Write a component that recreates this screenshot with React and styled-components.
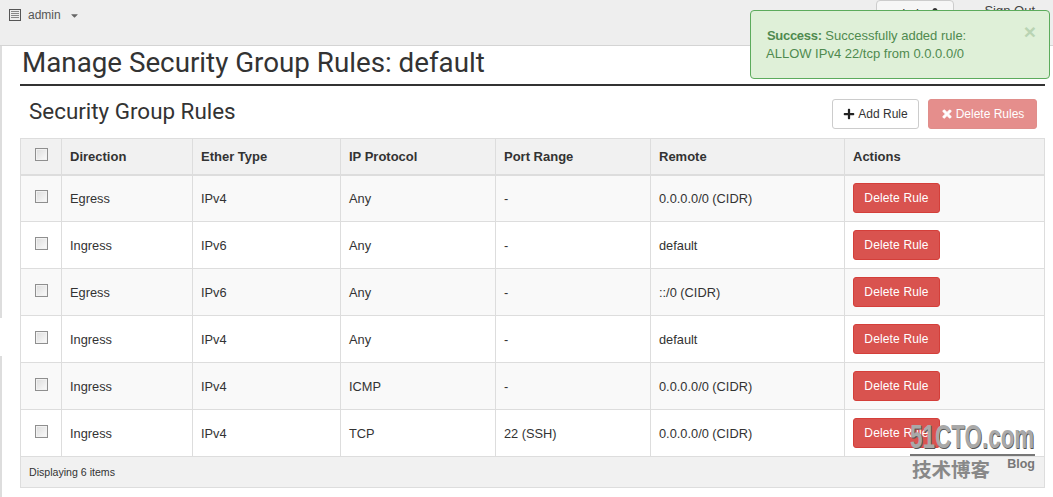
import React from "react";
import styled, { createGlobalStyle } from "styled-components";
import { FaPlus, FaTimes, FaUser, FaCaretDown } from "react-icons/fa";

const GlobalStyle = createGlobalStyle`
  html, body {
    margin: 0;
    padding: 0;
    background: #fff;
    overflow: hidden;
  }
  body {
    font-family: "Liberation Sans", Arial, sans-serif;
    font-size: 13px;
    color: #333;
  }
`;

const Page = styled.div`
  position: relative;
  width: 1053px;
  height: 497px;
  overflow: hidden;
`;

const Topbar = styled.div`
  display: flex;
  align-items: flex-start;
  justify-content: space-between;
  height: 45px;
  background: #eee;
  border-bottom: 1px solid #d4d4d4;
`;

const Project = styled.div`
  display: flex;
  align-items: center;
  gap: 7px;
  padding: 7px 0 0 9px;
  font-size: 12px;
  line-height: 16px;
  color: #555;
`;

const Caret = styled(FaCaretDown)`
  margin-left: 1px;
`;

const UserArea = styled.div`
  display: flex;
  align-items: flex-start;
  gap: 30px;
  padding-right: 18px;
`;

const UserButton = styled.div`
  display: flex;
  align-items: center;
  justify-content: center;
  gap: 4px;
  width: 78px;
  height: 26px;
  box-sizing: border-box;
  background: #f6f6f6;
  border: 1px solid #ccc;
  border-radius: 4px;
  color: #333;
`;

const SignOut = styled.span`
  font-size: 13px;
  line-height: 16px;
  padding-top: 3px;
  color: #444;
`;

const Body = styled.div`
  display: flex;
`;

const Rail = styled.div`
  width: 2px;
  height: 451px;
  flex: none;
  background: linear-gradient(
    #ddd 0 272px,
    #fff 272px 310px,
    #ddd 310px
  );
`;

const Content = styled.div`
  flex: 1;
  padding: 0 8px 0 18px;
`;

const PageTitle = styled.h1`
  margin: 0;
  height: 40px;
  box-sizing: border-box;
  padding-left: 2px;
  border-bottom: 2px solid #333;
  font-family: Roboto, sans-serif;
  font-weight: 400;
  font-size: 27.75px;
  line-height: 33px;
  color: #333;
`;

const SectionHead = styled.div`
  display: flex;
  align-items: flex-start;
  justify-content: space-between;
  height: 52px;
  padding: 11px 8px 0 9px;
  box-sizing: border-box;
`;

const SectionTitle = styled.h2`
  margin: 0;
  font-family: Roboto, sans-serif;
  font-weight: 400;
  font-size: 22.4px;
  line-height: 28px;
  color: #333;
`;

const Actions = styled.div`
  display: flex;
  gap: 9px;
  margin-top: 2px;
`;

const TopButton = styled.button`
  display: flex;
  align-items: center;
  justify-content: center;
  gap: 3px;
  width: ${(p) => p.$width}px;
  height: 30px;
  box-sizing: border-box;
  padding: 0;
  border: 1px solid ${(p) => (p.$danger ? "#e08e8b" : "#ccc")};
  border-radius: 3px;
  background: ${(p) => (p.$danger ? "#e58e8c" : "#fff")};
  color: ${(p) => (p.$danger ? "#fff" : "#333")};
  font-family: inherit;
  font-size: 12px;
`;

const BoldTimes = styled(FaTimes)`
  stroke: currentColor;
  stroke-width: 40;
`;

const Table = styled.table`
  width: 1024px;
  table-layout: fixed;
  border-collapse: collapse;
  border: 1px solid #ddd;
  font-size: 12.8px;
`;

const HeadCell = styled.th`
  height: 36px;
  padding: 0 8px;
  background: #f1f1f1;
  border: 1px solid #ddd;
  border-bottom: 2px solid #ddd;
  text-align: left;
  font-size: 13px;
  font-weight: 700;
  color: #333;
  box-sizing: border-box;
`;

const Row = styled.tr`
  background: ${(p) => (p.$odd ? "#f9f9f9" : "#fff")};
`;

const Cell = styled.td`
  height: 47px;
  padding: 0 8px;
  border: 1px solid #ddd;
  box-sizing: border-box;
  color: #333;
`;

const CheckCell = styled(Cell)`
  padding: 0;
`;

const Check = styled.span`
  display: block;
  width: 13px;
  height: 13px;
  box-sizing: border-box;
  margin: -4px auto 0;
  border: 1px solid #8f8f8f;
  background: linear-gradient(135deg, #dcdcdc, #fbfbfb);
  box-shadow: inset 0 0 0 1px #f2f2f2;
`;

const DeleteButton = styled.button`
  display: block;
  width: 87px;
  height: 30px;
  margin-top: -1px;
  padding: 0;
  border: 1px solid #d43f3a;
  border-radius: 3px;
  background: #d9534f;
  color: #fff;
  font-family: inherit;
  font-size: 12px;
  letter-spacing: 0.15px;
`;

const FootCell = styled.td`
  height: 31px;
  padding: 0 8px;
  background: #f1f1f1;
  border: 1px solid #ddd;
  font-size: 10.6px;
  color: #333;
  box-sizing: border-box;
`;

const Toast = styled.div`
  position: absolute;
  top: 10px;
  left: 750px;
  width: 300px;
  height: 69px;
  box-sizing: border-box;
  padding: 16px 0 0 15px;
  background: #dff0d8;
  border: 1px solid #5cab5c;
  border-radius: 4px;
  color: #4f8a4f;
  font-size: 13px;
  line-height: 18px;
`;

const ToastLine = styled.div`
  padding-left: ${(p) => p.$indent || 0}px;
`;

const ToastLabel = styled.strong`
  letter-spacing: -0.3px;
`;

const ToastClose = styled.span`
  position: absolute;
  top: 10px;
  right: 13px;
  font-size: 21px;
  line-height: 22px;
  font-weight: 700;
  color: #b9d4b3;
`;

const Mark = styled.div`
  position: absolute;
  left: 910px;
  top: 424px;
  width: 125px;
  color: #8a8a8a;
`;

const MarkRule = styled.div`
  height: 30px;
  border-bottom: 2px solid #777;
`;

const MarkLogo = styled.div`
  display: inline-block;
  font-family: "Liberation Sans", sans-serif;
  font-weight: 700;
  font-size: 34px;
  line-height: 24px;
  white-space: nowrap;
  color: #a9a9a9;
  text-shadow: 1px 1px 0 #555;
  transform: scaleX(0.66);
  transform-origin: left center;
`;

const MarkFoot = styled.div`
  display: flex;
  justify-content: space-between;
  align-items: flex-start;
  margin-top: 1px;
  padding-left: 2px;
`;

const MarkCn = styled.span`
  font-family: "Noto Sans CJK SC", sans-serif;
  font-size: 19.5px;
  line-height: 24px;
  font-weight: 700;
  color: #888;
`;

const MarkBlog = styled.span`
  font-size: 12.5px;
  font-weight: 700;
  line-height: 14px;
  color: #777;
`;

const widths = [41, 131, 148, 155, 155, 194, 200];
const headers = ["Direction", "Ether Type", "IP Protocol", "Port Range", "Remote", "Actions"];
const rules = [
  ["Egress", "IPv4", "Any", "-", "0.0.0.0/0 (CIDR)"],
  ["Ingress", "IPv6", "Any", "-", "default"],
  ["Egress", "IPv6", "Any", "-", "::/0 (CIDR)"],
  ["Ingress", "IPv4", "Any", "-", "default"],
  ["Ingress", "IPv4", "ICMP", "-", "0.0.0.0/0 (CIDR)"],
  ["Ingress", "IPv4", "TCP", "22 (SSH)", "0.0.0.0/0 (CIDR)"],
];

export default function App() {
  return (
    <Page>
      <GlobalStyle />
      <Topbar>
        <Project>
          <svg width="12" height="12" viewBox="0 0 12 12" fill="none" stroke="#555">
            <rect x="0.5" y="0.5" width="11" height="11" />
            <path d="M2 2.5h8M2 4.5h8M2 6.5h8M2 8.5h8" stroke="#888" />
          </svg>
          <span>admin</span>
          <Caret size={11} color="#666" />
        </Project>
        <UserArea>
          <UserButton>
            admin <FaUser size={10} />
          </UserButton>
          <SignOut>Sign Out</SignOut>
        </UserArea>
      </Topbar>
      <Body>
        <Rail />
        <Content>
          <PageTitle>Manage Security Group Rules: default</PageTitle>
          <SectionHead>
            <SectionTitle>Security Group Rules</SectionTitle>
            <Actions>
              <TopButton $width={87}>
                <FaPlus size={12} color="#222" /> Add Rule
              </TopButton>
              <TopButton $width={109} $danger>
                <BoldTimes size={12} /> Delete Rules
              </TopButton>
            </Actions>
          </SectionHead>
          <Table>
            <colgroup>
              {widths.map((w, i) => (
                <col key={i} style={{ width: w }} />
              ))}
            </colgroup>
            <thead>
              <tr>
                <HeadCell>
                  <Check />
                </HeadCell>
                {headers.map((h) => (
                  <HeadCell key={h}>{h}</HeadCell>
                ))}
              </tr>
            </thead>
            <tbody>
              {rules.map((rule, i) => (
                <Row key={i} $odd={i % 2 === 0}>
                  <CheckCell>
                    <Check />
                  </CheckCell>
                  {rule.map((value, j) => (
                    <Cell key={j}>{value}</Cell>
                  ))}
                  <Cell>
                    <DeleteButton>Delete Rule</DeleteButton>
                  </Cell>
                </Row>
              ))}
            </tbody>
            <tfoot>
              <tr>
                <FootCell colSpan={7}>Displaying 6 items</FootCell>
              </tr>
            </tfoot>
          </Table>
        </Content>
      </Body>
      <Toast>
        <ToastLine $indent={1}>
          <ToastLabel>Success:</ToastLabel> Successfully added rule:
        </ToastLine>
        <ToastLine>ALLOW IPv4 22/tcp from 0.0.0.0/0</ToastLine>
        <ToastClose>×</ToastClose>
      </Toast>
      <Mark>
        <MarkRule>
          <MarkLogo>51CTO.com</MarkLogo>
        </MarkRule>
        <MarkFoot>
          <MarkCn>技术博客</MarkCn>
          <MarkBlog>Blog</MarkBlog>
        </MarkFoot>
      </Mark>
    </Page>
  );
}
